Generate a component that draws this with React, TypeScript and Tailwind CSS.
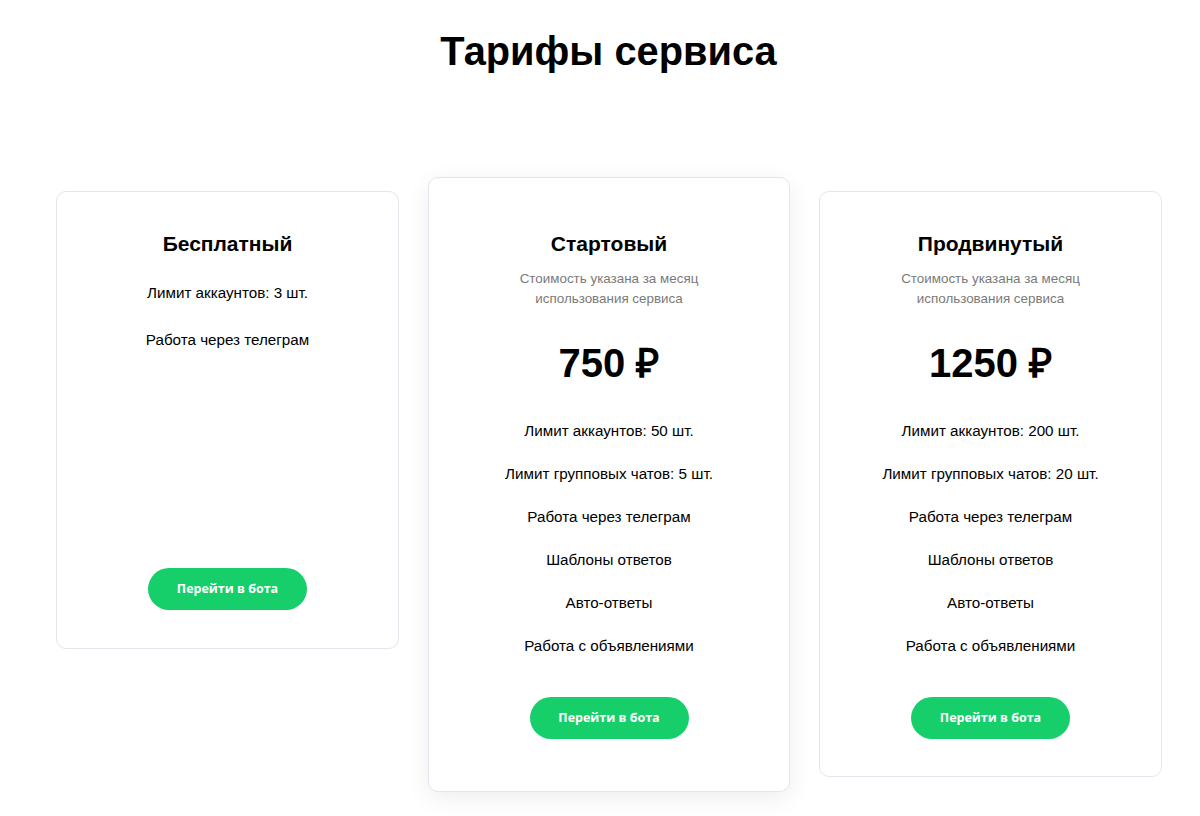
import React from "react";

const sans = { fontFamily: '"Liberation Sans", Arial, sans-serif' };

function Button() {
  return (
    <button
      className="w-[159px] h-[42px] rounded-full bg-[#16cf6b] text-white text-[12.5px] font-bold"
      style={{ fontFamily: '"Open Sans", "Noto Sans", sans-serif' }}
    >
      Перейти в бота
    </button>
  );
}

function Paid({ title, price, features }: { title: string; price: string; features: string[] }) {
  return (
    <div className="flex flex-col items-center">
      <h2 className="text-[21px] font-bold leading-[24px] mt-[40px] text-black">{title}</h2>
      <p className="text-[13.4px] leading-[20px] text-[#7a7a7a] mt-[13px] text-center">
        Стоимость указана за месяц
        <br />
        использования сервиса
      </p>
      <div className="text-[40px] font-bold leading-[46px] mt-[31px] text-black">{price}</div>
      <ul className="mt-[36px] flex flex-col items-center gap-[25px]">
        {features.map((f) => (
          <li key={f} className="text-[15.2px] leading-[18px] text-black">
            {f}
          </li>
        ))}
      </ul>
      <div className="mt-[42px]">
        <Button />
      </div>
    </div>
  );
}

const feats = (a: string, b: string) => [
  `Лимит аккаунтов: ${a} шт.`,
  `Лимит групповых чатов: ${b} шт.`,
  "Работа через телеграм",
  "Шаблоны ответов",
  "Авто-ответы",
  "Работа с объявлениями",
];

export default function App() {
  return (
    <div className="min-h-[816px] bg-white" style={sans}>
      <h1 className="text-center text-[39.8px] font-bold leading-[46px] pt-[28px] pl-[17px] text-black">Тарифы сервиса</h1>
      <div className="flex items-start gap-[29px] pl-[56px] mt-[103px]">
        <div className="w-[343px] h-[458px] mt-[14px] rounded-[10px] border border-[#e3e6ec] bg-white flex flex-col items-center">
          <h2 className="text-[21px] font-bold leading-[24px] mt-[40px] text-black">Бесплатный</h2>
          <p className="text-[15.2px] leading-[18px] mt-[28px] text-black">Лимит аккаунтов: 3 шт.</p>
          <p className="text-[15.2px] leading-[18px] mt-[29px] text-black">Работа через телеграм</p>
          <div className="mt-auto mb-[38px]">
            <Button />
          </div>
        </div>
        <div className="w-[362px] h-[615px] rounded-[10px] border border-[#e3e6ec] bg-white shadow-[0_6px_24px_rgba(0,0,0,0.07)] pt-[14px]">
          <Paid title="Стартовый" price="750 ₽" features={feats("50", "5")} />
        </div>
        <div className="w-[343px] h-[586px] mt-[14px] rounded-[10px] border border-[#e3e6ec] bg-white">
          <Paid title="Продвинутый" price="1250 ₽" features={feats("200", "20")} />
        </div>
      </div>
    </div>
  );
}
